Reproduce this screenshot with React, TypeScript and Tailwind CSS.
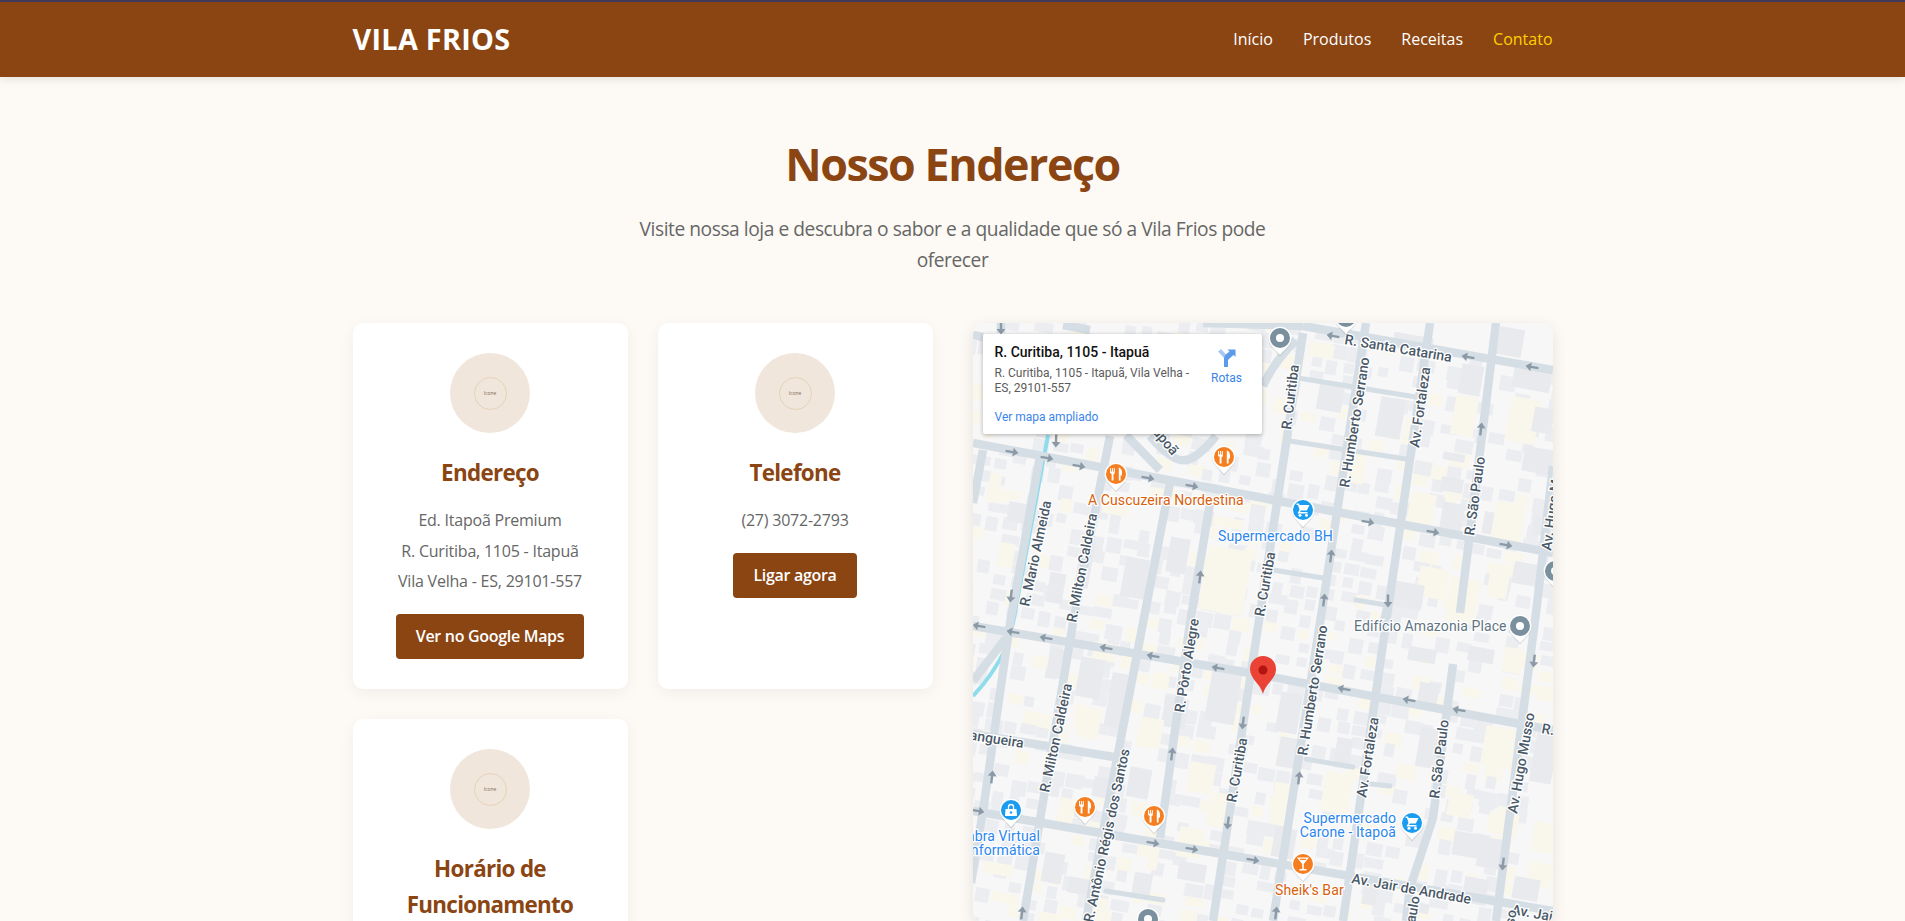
import React from "react";

// map geometry is in local coords: 0,0 is the map's top left corner
const ROADS: string[] = [
  "M0 120L290 175L580 230",
  "M330 3L580 47",
  "M0 303L277 350L547 401L580 407",
  "M0 488L290 538L580 588",
  "M0 411L147 435",
  "M67 133L37 300L10 488L-2 560",
  "M10 127L0 180",
  "M137 113L100 300L50 598",
  "M197 160L170 300L113 598",
  "M237 180L217 300L187 515",
  "M330 10L240 598",
  "M393 0L347 300L300 598",
  "M457 0L413 300L370 598",
  "M523 0L487 290",
  "M480 341L460 495L437 565L433 598",
  "M580 143L563 290L523 598",
  "M290 63Q300 40 323 17",
  "M153 112L187 147",
  "M177 113Q200 140 213 137Q225 135 243 113",
  "M33 315L0 358",
  "M0 12L10 14",
  "M28 0L28 10",
  "M90 2L117 7",
  "M230 0L330 3",
];
const THIN_ROADS: string[] = [
  "M325 55L443 74",
  "M317 118L433 136",
  "M300 247L350 255",
  "M133 568L190 577",
  "M383 277L413 282L410 295",
  "M333 436L380 444",
  "M398 461L417 463",
];

const BUILDINGS: [number, number, number, number, number][] = [
  [487, 42, 22, 30, 0], [480, 73, 23, 40, 1], [525, 5, 25, 28, 0], [540, 45, 38, 22, 0], [535, 75, 30, 45, 1],
  [550, 125, 30, 25, 0], [560, 85, 20, 25, 0], [470, 130, 22, 8, 0], [468, 155, 22, 14, 0], [468, 180, 22, 30, 0],
  [435, 170, 26, 40, 1], [510, 190, 24, 22, 0], [520, 180, 30, 40, 1], [560, 195, 22, 18, 0], [335, 20, 26, 14, 1],
  [345, 60, 25, 28, 0], [405, 75, 25, 40, 0], [370, 130, 22, 30, 1], [420, 12, 40, 16, 0], [300, 75, 16, 16, 1],
  [540, 240, 26, 22, 0], [515, 250, 20, 25, 1], [445, 245, 30, 30, 1], [420, 260, 30, 25, 0], [475, 255, 30, 45, 1],
  [495, 325, 26, 14, 0], [435, 325, 28, 14, 0], [445, 360, 20, 26, 0], [530, 325, 20, 25, 1], [510, 405, 40, 40, 1],
  [560, 410, 22, 50, 0], [445, 405, 22, 40, 0], [490, 440, 16, 10, 1], [362, 415, 16, 30, 0], [305, 370, 22, 40, 0],
  [305, 415, 24, 30, 0], [300, 460, 20, 30, 1], [350, 450, 28, 40, 1], [380, 495, 24, 16, 1], [475, 470, 24, 24, 1],
  [515, 490, 30, 22, 1], [480, 510, 30, 24, 0], [505, 515, 24, 30, 0], [555, 540, 24, 24, 1], [490, 555, 24, 26, 0],
  [540, 555, 26, 22, 0], [560, 500, 26, 30, 1], [300, 505, 22, 30, 0], [390, 560, 14, 22, 0], [440, 580, 16, 10, 0],
  [130, 172, 26, 20, 1], [195, 215, 20, 35, 0], [150, 235, 24, 40, 0], [230, 225, 45, 65, 1], [240, 195, 30, 10, 1],
  [105, 215, 14, 50, 0], [35, 180, 24, 20, 0], [25, 220, 16, 24, 1], [15, 150, 12, 30, 1], [75, 250, 16, 30, 0],
  [120, 320, 24, 18, 1], [105, 335, 24, 40, 0], [75, 325, 14, 30, 0], [105, 385, 22, 30, 1], [135, 350, 16, 55, 0],
  [180, 350, 16, 16, 1], [190, 375, 24, 30, 0], [165, 395, 24, 30, 1], [235, 350, 30, 50, 0], [215, 440, 26, 30, 1],
  [235, 470, 20, 34, 1], [120, 455, 24, 20, 0], [155, 445, 22, 30, 0], [85, 475, 16, 26, 1], [205, 505, 24, 30, 1],
  [160, 550, 18, 26, 0], [175, 525, 10, 22, 1], [205, 540, 28, 18, 0], [95, 555, 22, 16, 0], [70, 530, 20, 30, 0],
  [65, 590, 24, 12, 1], [10, 540, 30, 12, 1], [120, 575, 14, 14, 1],
];

function fillerBuildings() {
  // rows of small lots, same tilt as the street grid, uneven on purpose
  const out: React.ReactNode[] = [];
  let seed = 11;
  const next = (n: number) => {
    seed = (seed * 1103515245 + 12345) & 0x7fffffff;
    return (seed >> 8) % n;
  };
  for (let i = -2; i < 36; i++) {
    for (let j = -4; j < 46; j++) {
      const r = next(100);
      const w = 10 + next(10);
      const h = 9 + next(7);
      const jx = next(5);
      const jy = next(4);
      if (r > 60) continue;
      const x = i * 17 + j * -2.4 + 8 + jx;
      const y = j * 14 + i * 3 + 4 + jy;
      out.push(
        <rect
          key={`${i}-${j}`}
          x={x}
          y={y}
          width={w}
          height={h}
          fill={r < 46 ? "#ebedf0" : "#f9f6ec"}
          transform={`rotate(10 ${x + 7} ${y + 5})`}
        />
      );
    }
  }
  return out;
}

// x, y, heading in degrees
const ARROWS: [number, number, number][] = [
  [39, 129, 10], [74, 135, 10], [106, 143, 10], [175, 155, 10], [219, 163, 10], [395, 199, 10], [460, 209, 10], [533, 222, 10],
  [360, 13, 190], [495, 34, 190], [559, 44, 190],
  [6, 303, 190], [40, 309, 190], [73, 315, 190], [133, 325, 190], [180, 333, 190], [245, 345, 190], [371, 366, 190], [436, 377, 190], [486, 387, 190],
  [5, 488, 10], [180, 520, 10], [219, 526, 10], [280, 537, 10],
  [28, 5, 90], [83, 118, 92], [38, 273, 97], [270, 400, 97], [255, 500, 97], [561, 338, 97], [530, 541, 97], [415, 278, 90],
  [227, 254, 277], [508, 106, 277], [358, 233, 277], [351, 277, 277], [199, 431, 277], [19, 454, 277], [49, 590, 277], [326, 455, 277], [303, 590, 277],
];

// text, x, y, rotation, anchor
const STREETS: [string, number, number, number, "start" | "end"][] = [
  ["R. Santa Catarina", 371, 21, 9.5, "start"],
  ["R. Curitiba", 318, 107, -83, "start"],
  ["R. Humberto Serrano", 376, 165, -81, "start"],
  ["Av. Fortaleza", 446, 125, -82, "start"],
  ["R. São Paulo", 501, 213, -82, "start"],
  ["Av. Hugo Musso", 578, 228, -82, "start"],
  ["R. Mario Almeida", 56, 284, -78, "start"],
  ["R. Milton Caldeira", 103, 300, -79, "start"],
  ["R. Curitiba", 291, 294, -80, "start"],
  ["R. Itapoã", 199, 133, 50, "end"],
  ["R. Pôrto Alegre", 211, 390, -81, "start"],
  ["R. Milton Caldeira", 76, 470, -78, "start"],
  ["R. Antônio Régis dos Santos", 120, 600, -78, "start"],
  ["R. Curitiba", 263, 480, -80, "start"],
  ["Mangueira", 50, 425, 9, "end"],
  ["R. Humberto Serrano", 334, 433, -81, "start"],
  ["Av. Fortaleza", 393, 475, -81, "start"],
  ["R. São Paulo", 466, 476, -83, "start"],
  ["Av. Hugo Musso", 544, 491, -80, "start"],
  ["R. Santa", 568, 410, 10, "start"],
  ["Av. Jair de Andrade", 378, 560, 10, "start"],
  ["Av. Jair", 538, 591, 10, "start"],
  ["Av. Hugo Musso", 526, 688, -80, "start"],
  ["R. São Paulo", 433, 652, -80, "start"],
];

const POIS: [string, number, number, string, "start" | "end"][] = [
  ["A Cuscuzeira Nordestina", 115, 182, "#d9600c", "start"],
  ["Supermercado BH", 245, 218, "#2b86ee", "start"],
  ["Edifício Amazonia Place", 381, 308, "#5f7483", "start"],
  ["Supermercado", 423, 500, "#2b86ee", "end"],
  ["Carone - Itapoã", 423, 514, "#2b86ee", "end"],
  ["Sheik's Bar", 302, 572, "#d9600c", "start"],
  ["Sombra Virtual", 67, 518, "#2b86ee", "end"],
  ["Informática", 67, 532, "#2b86ee", "end"],
];

const Pin = ({ x, y, color, children }: { x: number; y: number; color: string; children?: React.ReactNode }) => (
  <g transform={`translate(${x} ${y})`}>
    <path d="M0 17.5L-8.5 8A11.5 11.5 0 1 1 8.5 8Z" fill="#000" opacity="0.12" transform="translate(0 1)" />
    <path d="M0 17L-8.5 8A11.5 11.5 0 1 1 8.5 8Z" fill="#fff" />
    <circle r="10" fill={color} />
    {children}
  </g>
);

const Fork = () => (
  <g fill="#fff">
    <path d="M-6 -6h1v3.5h.9V-6h1v3.5h.9V-6h1v4.5c0 1-.6 1.6-1.3 1.8V6.500h-1.900V-0.300C-5.500 -0.500-6 -1-6 -1.500Z" />
    <path d="M3 -6.500c1.800.5 3 2.500 3 5V1.500H4.600V6.500H2.800V-6.500Z" />
  </g>
);

const Cart = () => (
  <g fill="#fff">
    <path d="M-6.500 -6.500H-4L-3.400 -5H6.500L3.800 0.500H-2.200L-3 2H4.500V3.500H-5.500L-3.500 -0.200L-5 -5H-6.500Z" />
    <circle cx="-3" cy="5.200" r="1.500" />
    <circle cx="3.500" cy="5.200" r="1.500" />
  </g>
);

const Bag = () => (
  <g>
    <path d="M-5.500 -1H5.500L6 6H-6Z" fill="#fff" />
    <path d="M-2.500 -1V-3A2.500 2.500 0 0 1 2.500 -3V-1" fill="none" stroke="#fff" strokeWidth="1.300" />
    <circle cx="0" cy="2.500" r="1.200" fill="#1a9cf0" />
  </g>
);

const Glass = () => (
  <g fill="#fff">
    <path d="M-6 -6.500H6L0.800 0V5H3.500V6.500H-3.500V5H-0.800V0Z" />
    <path d="M-3.500 -5.200H3.500L2.600 -4H-2.600Z" fill="#f57f20" />
  </g>
);

const MapDrawing = () => (
  <svg viewBox="0 0 580 600" className="block w-full h-full" fontFamily="Roboto, sans-serif">
    <rect width="580" height="600" fill="#f7f7f8" />
    {fillerBuildings()}
    {BUILDINGS.map(([x, y, w, h, beige], i) => (
      <rect
        key={i}
        x={x}
        y={y}
        width={w}
        height={h}
        fill={beige ? "#f9f6ec" : "#e8eaee"}
        transform={`rotate(10 ${x + w / 2} ${y + h / 2})`}
      />
    ))}
    <path d="M75 112L40 300L33 325Q20 352 0 373" fill="none" stroke="#8fdcec" strokeWidth="4" />
    {THIN_ROADS.map((d) => (
      <path key={d} d={d} fill="none" stroke="#d6dee5" strokeWidth="5" strokeLinecap="round" />
    ))}
    {ROADS.map((d) => (
      <path key={d} d={d} fill="none" stroke="#d6dee5" strokeWidth="8.500" strokeLinejoin="round" />
    ))}
    {ARROWS.map(([x, y, a], i) => (
      <path
        key={i}
        d="M-6.500 -1.200H1V-4.500L6.500 0L1 4.500V1.200H-6.500Z"
        fill="#8b9aa6"
        transform={`translate(${x} ${y}) rotate(${a})`}
      />
    ))}
    {STREETS.map(([t, x, y, r, anchor], i) => (
      <text
        key={i}
        x={x}
        y={y}
        transform={`rotate(${r} ${x} ${y})`}
        textAnchor={anchor}
        fontSize="14"
        fontWeight="500"
        fill="#4a5968"
        stroke="#fff"
        strokeWidth="2.500"
        paintOrder="stroke"
      >
        {t}
      </text>
    ))}
    {POIS.map(([t, x, y, color, anchor]) => (
      <text
        key={t}
        x={x}
        y={y}
        textAnchor={anchor}
        fontSize="14"
        letterSpacing="0.1"
        fill={color}
        stroke="#fff"
        strokeWidth="2.500"
        paintOrder="stroke"
      >
        {t}
      </text>
    ))}
    <Pin x={143} y={151} color="#f57f20"><Fork /></Pin>
    <Pin x={251} y={134} color="#f57f20"><Fork /></Pin>
    <Pin x={112} y={484} color="#f57f20"><Fork /></Pin>
    <Pin x={181} y={493} color="#f57f20"><Fork /></Pin>
    <Pin x={330} y={187} color="#1a9cf0"><Cart /></Pin>
    <Pin x={439} y={500} color="#1a9cf0"><Cart /></Pin>
    <Pin x={38} y={487} color="#1a9cf0"><Bag /></Pin>
    <Pin x={330} y={541} color="#f57f20"><Glass /></Pin>
    {[[307, 15], [582, 248], [547, 303], [175, 596], [373, -6]].map(([x, y]) => (
      <Pin key={x} x={x} y={y} color="#7b909e">
        <circle r="4" fill="#fff" />
      </Pin>
    ))}
    <path d="M290 371C287 360 277 356 277 346A13 13 0 0 1 303 346C303 356 293 360 290 371Z" fill="#ea4335" />
    <circle cx="290" cy="347" r="4.500" fill="#b31412" />
  </svg>
);

const DirectionsIcon = () => (
  <svg viewBox="0 0 20 20" className="w-[20px] h-[20px]">
    <path d="M1 3.500L4 1L11 8.500V19H7V10Z" fill="#a6c8f2" />
    <path d="M7 19V11C7 8.500 8 7 10 5.500L12.500 3.500L10.500 1.500H18.500V9L16.500 7L13 10C11.500 11.300 11 12 11 13V19Z" fill="#5c9bea" />
  </svg>
);

const InfoCard = ({ title, children }: { title: string; children?: React.ReactNode }) => (
  <div className="bg-white rounded-[10px] shadow-[0_4px_15px_rgba(0,0,0,0.05)] p-[30px] text-center">
    <div className="w-[80px] h-[80px] rounded-full bg-[#f0e6db] mx-auto mb-[22px] flex items-center justify-center">
      <div className="w-[33px] h-[33px] rounded-full border border-[#e6d2b8] flex items-center justify-center text-[5px] leading-none text-[#7d6a58]">
        Icone
      </div>
    </div>
    <h3 className="text-[22.4px] font-bold text-[#8b4513] mb-[17px] tracking-[-0.7px]">{title}</h3>
    {children}
  </div>
);

const Line = ({ children }: { children: React.ReactNode }) => (
  <p className="mb-[5px] text-[#666] tracking-[-0.22px]">{children}</p>
);

const ActionButton = ({ children }: { children: React.ReactNode }) => (
  <a className="inline-block mt-[14px] px-[20px] py-[10px] bg-[#8b4513] text-white rounded-[4px] font-semibold tracking-[-0.3px]">
    {children}
  </a>
);

export default function App() {
  return (
    <div className="h-[921px] overflow-hidden bg-[#fdfaf5] font-['Open_Sans',sans-serif] text-[16px] leading-[1.6]">
      <header className="bg-[#8b4513] border-t-2 border-[#3f3a5a] shadow-[0_2px_10px_rgba(0,0,0,0.1)] h-[77px]">
        <div className="w-[1200px] mx-auto h-full flex items-center justify-between">
          <div className="text-[28.8px] font-bold text-white tracking-[0.3px]">VILA FRIOS</div>
          <nav className="flex gap-[30px] text-white">
            <a>Início</a>
            <a>Produtos</a>
            <a>Receitas</a>
            <a className="text-[#ffd000]">Contato</a>
          </nav>
        </div>
      </header>

      <main className="w-[1200px] mx-auto pt-[60px]">
        <h1 className="text-[44.8px] font-bold text-[#8b4513] text-center leading-[1.2] tracking-[-1.45px] mb-[22px]">
          Nosso Endereço
        </h1>
        <p className="text-[19.2px] leading-[31.5px] text-[#666] text-center max-w-[650px] mx-auto mb-[47.500px] tracking-[-0.45px]">
          Visite nossa loja e descubra o sabor e a qualidade que só a Vila Frios pode oferecer
        </p>

        <div className="grid grid-cols-2 gap-[40px]">
          <div className="grid grid-cols-2 gap-[30px] content-start">
            <InfoCard title="Endereço">
              <Line>Ed. Itapoã Premium</Line>
              <Line>R. Curitiba, 1105 - Itapuã</Line>
              <Line>Vila Velha - ES, 29101-557</Line>
              <ActionButton>Ver no Google Maps</ActionButton>
            </InfoCard>
            <InfoCard title="Telefone">
              <Line>(27) 3072-2793</Line>
              <ActionButton>Ligar agora</ActionButton>
            </InfoCard>
            <InfoCard title="Horário de Funcionamento" />
          </div>

          <div className="relative h-[600px] rounded-[10px] overflow-hidden shadow-[0_4px_15px_rgba(0,0,0,0.1)]">
            <MapDrawing />
            <div className="absolute left-[10px] top-[11px] w-[279px] h-[100px] bg-white rounded-[2px] shadow-[0_1px_4px_rgba(0,0,0,0.3)] font-['Roboto',sans-serif] flex justify-between pl-[12px] pr-[19px] pt-[10px]">
              <div className="w-[200px]">
                <div className="text-[14px] leading-[16px] font-medium text-[#111]">R. Curitiba, 1105 - Itapuã</div>
                <div className="text-[12px] leading-[14.500px] text-[#5b5b5b] mt-[6px]">
                  R. Curitiba, 1105 - Itapuã, Vila Velha - ES, 29101-557
                </div>
                <div className="text-[12px] leading-[14px] text-[#3a84ec] mt-[15px]">Ver mapa ampliado</div>
              </div>
              <div className="flex flex-col items-center w-[32px] pt-[4px] text-[12px] leading-[14px] text-[#3a84ec]">
                <DirectionsIcon />
                <span className="mt-[3px]">Rotas</span>
              </div>
            </div>
          </div>
        </div>
      </main>
    </div>
  );
}
